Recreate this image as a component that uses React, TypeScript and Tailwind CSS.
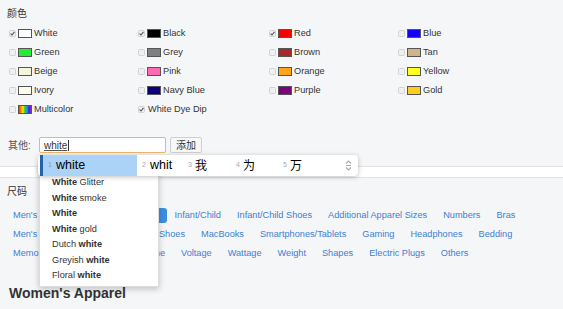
import React from "react";

const colors: { name: string; color?: string; checked?: boolean; multi?: boolean }[] = [
  { name: "White", color: "#ffffff", checked: true },
  { name: "Black", color: "#000000", checked: true },
  { name: "Red", color: "#ff0000", checked: true },
  { name: "Blue", color: "#1400ff" },
  { name: "Green", color: "#22ee33" },
  { name: "Grey", color: "#808080" },
  { name: "Brown", color: "#a52a2a" },
  { name: "Tan", color: "#d2b48c" },
  { name: "Beige", color: "#f5f5dc" },
  { name: "Pink", color: "#ff69b4" },
  { name: "Orange", color: "#ffa51a" },
  { name: "Yellow", color: "#ffff22" },
  { name: "Ivory", color: "#fffff0" },
  { name: "Navy Blue", color: "#0a0080" },
  { name: "Purple", color: "#800080" },
  { name: "Gold", color: "#ffcc22" },
  { name: "Multicolor", multi: true },
  { name: "White Dye Dip", checked: true },
];

const sizeRows: { label: string; active?: boolean }[][] = [
  [
    { label: "Men's Apparel" },
    { label: "Women's Apparel", active: true },
    { label: "Infant/Child" },
    { label: "Infant/Child Shoes" },
    { label: "Additional Apparel Sizes" },
    { label: "Numbers" },
    { label: "Bras" },
  ],
  [
    { label: "Men's Shoes" },
    { label: "Women's Running Shoes" },
    { label: "MacBooks" },
    { label: "Smartphones/Tablets" },
    { label: "Gaming" },
    { label: "Headphones" },
    { label: "Bedding" },
  ],
  [
    { label: "Memory Size" },
    { label: "Capacity" },
    { label: "Volume" },
    { label: "Voltage" },
    { label: "Wattage" },
    { label: "Weight" },
    { label: "Shapes" },
    { label: "Electric Plugs" },
    { label: "Others" },
  ],
];

const suggestions: [string, string, boolean][] = [
  ["White", " Glitter", true],
  ["White", " smoke", true],
  ["White", "", true],
  ["White", " gold", true],
  ["Dutch ", "white", false],
  ["Greyish ", "white", false],
  ["Floral ", "white", false],
];

function Checkbox({ checked }: { checked?: boolean }) {
  return (
    <span className="flex h-[7px] w-[7px] shrink-0 items-center justify-center rounded-[1.5px] border border-[#d2d2d2] bg-[#f0f0f0]">
      {checked && (
        <svg width="5" height="5" viewBox="0 0 5 5">
          <path d="M0.6 2.6 L2 4 L4.5 0.9" stroke="#555" strokeWidth="1.1" fill="none" />
        </svg>
      )}
    </span>
  );
}

export default function App() {
  return (
    <div
      className="relative h-[309px] w-[563px] overflow-hidden bg-[#f5f6f8] text-[#333]"
      style={{ fontFamily: '"Liberation Sans", "Noto Sans CJK SC", sans-serif' }}
    >
      <div className="pl-[7px] pt-[7px] text-[10px] leading-[14px] text-[#333]">颜色</div>
      <div className="mt-[3px] grid grid-cols-[129px_131px_129px_1fr] pl-[9px]">
        {colors.map((c) => (
          <div key={c.name} className="flex h-[19px] items-center text-[9.2px] text-[#333]">
            <Checkbox checked={c.checked} />
            {c.multi ? (
              <span
                className="ml-[2px] mr-[2px] h-[9px] w-[14px] border border-[#555]"
                style={{
                  background:
                    "linear-gradient(to right,#ff2020,#ff9900,#ffee00,#22cc33,#2299ff,#3322cc,#aa22cc)",
                }}
              />
            ) : c.color ? (
              <span
                className="ml-[2px] mr-[2px] h-[9px] w-[14px] border border-[#555]"
                style={{ background: c.color }}
              />
            ) : (
              <span className="w-[3px]" />
            )}
            <span>{c.name}</span>
          </div>
        ))}
      </div>

      <div className="mt-[18px] flex items-center pl-[8px] text-[10px]">
        <span className="w-[31px] text-[#555]">其他:</span>
        <div className="flex h-[16px] w-[127px] items-center rounded-[2px] border border-[#efb56c] bg-white pl-[4px]">
          <span className="underline decoration-[#555]">white</span>
          <span className="ml-[1px] h-[11px] w-[1px] bg-[#333]" />
        </div>
        <button className="ml-[4px] flex h-[16px] w-[32px] items-center justify-center rounded-[2px] border border-[#cfcfcf] bg-[#f7f7f7] text-[10px] text-[#333]">
          添加
        </button>
      </div>

      <div className="mt-[13px] h-[12px] border-y border-[#e3e3e5] bg-white" />

      <div className="mt-[7px] pl-[7px] text-[10px] leading-[14px]">尺码</div>
      <div className="mt-[7px] flex flex-col pl-[5px]">
        {sizeRows.map((row, i) => (
          <div key={i} className="flex h-[19px] items-center text-[9.2px]">
            {row.map((s) =>
              s.active ? (
                <span
                  key={s.label}
                  className="flex h-[15px] items-center rounded-[3px] bg-[#3b8fe2] px-[8px] text-white"
                >
                  {s.label}
                </span>
              ) : (
                <span key={s.label} className="whitespace-nowrap px-[8px] text-[#3d7fd3]">
                  {s.label}
                </span>
              )
            )}
          </div>
        ))}
      </div>

      <div className="mt-[21px] pl-[9px] text-[14px] font-bold leading-[18px] text-[#333]">
        Women's Apparel
      </div>

      {/* autocomplete dropdown */}
      <div className="absolute left-[39px] top-[165px] w-[120px] border border-[#dcdcdc] bg-white pb-[2px] pl-[12px] pt-[9px] shadow-[0_2px_6px_rgba(0,0,0,0.22)]">
        {suggestions.map(([a, b, boldFirst], i) => (
          <div key={i} className="whitespace-nowrap text-[9.2px] leading-[15.5px] text-[#333]">
            {boldFirst ? (
              <>
                <b>{a}</b>
                {b}
              </>
            ) : (
              <>
                {a}
                <b>{b}</b>
              </>
            )}
          </div>
        ))}
      </div>

      {/* IME candidate bar */}
      <div className="absolute left-[38px] top-[155px] flex h-[21px] w-[320px] items-center rounded-[4px] bg-white shadow-[0_1px_5px_rgba(0,0,0,0.25)]">
        <div className="ml-[2px] flex h-[21px] w-[97px] items-center border-l-[3px] border-[#2563a6] bg-[#abd2f7] pl-[5px]">
          <span className="w-[8px] text-[7px] text-[#7f9dbb]">1</span>
          <span className="text-[12.5px] text-black">white</span>
        </div>
        <div className="flex w-[46px] items-center pl-[5px]">
          <span className="w-[8px] text-[7px] text-[#aaa]">2</span>
          <span className="text-[12.5px] text-black">whit</span>
        </div>
        <div className="flex w-[48px] items-center pl-[5px]">
          <span className="w-[7px] text-[7px] text-[#aaa]">3</span>
          <span className="text-[12px] text-black">我</span>
        </div>
        <div className="flex w-[47px] items-center pl-[5px]">
          <span className="w-[7px] text-[7px] text-[#aaa]">4</span>
          <span className="text-[12px] text-black">为</span>
        </div>
        <div className="flex w-[60px] items-center pl-[5px]">
          <span className="w-[7px] text-[7px] text-[#aaa]">5</span>
          <span className="text-[12px] text-black">万</span>
        </div>
        <svg width="7" height="11" viewBox="0 0 7 11" className="ml-[7px]">
          <path d="M1 3.5 L3.5 1 L6 3.5" stroke="#aaa" strokeWidth="1.1" fill="none" />
          <line x1="1" y1="5.5" x2="6" y2="5.5" stroke="#aaa" strokeWidth="1" />
          <path d="M1 7.5 L3.5 10 L6 7.5" stroke="#aaa" strokeWidth="1.1" fill="none" />
        </svg>
      </div>
    </div>
  );
}
